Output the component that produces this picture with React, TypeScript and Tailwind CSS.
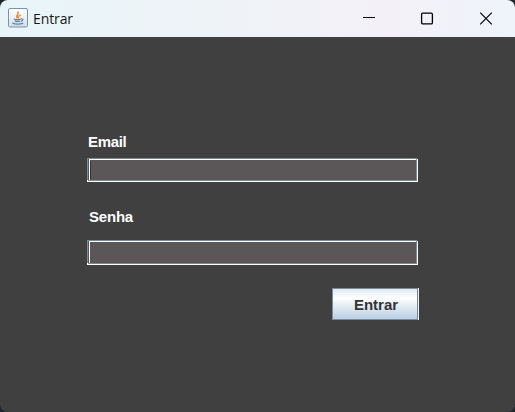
import React from "react";

function JavaIcon() {
  return (
    <svg width="20" height="20" viewBox="0 0 20 20" fill="none">
      <defs>
        <linearGradient id="tile" x1="0" y1="0" x2="0" y2="1">
          <stop offset="0" stopColor="#ffffff" />
          <stop offset="0.5" stopColor="#edf1f4" />
          <stop offset="1" stopColor="#cfdbe4" />
        </linearGradient>
      </defs>
      <rect x="0.5" y="0.5" width="19" height="18.5" rx="1.5" fill="url(#tile)" stroke="#7894aa" />
      <path d="M9.3 10.3C6.8 7.7 12 6.5 9.7 3.5M10.8 10.5C9.2 8.8 10.4 7.8 12.6 6.9" stroke="#ee9045" strokeWidth="1.6" />
      <path d="M5.8 11.2c2 .7 5 .6 7 0M6.8 13.2c1.8.5 3.8.5 5.4 0M13.2 11c2.3-.6 2.2 1.7-.3 2.3M4.4 15.2c2.8 1.4 8 1.3 10.8 0" stroke="#6687a3" strokeWidth="1.3" />
    </svg>
  );
}

function TitleBar() {
  return (
    <header className="flex h-[37px] items-center rounded-t-lg bg-linear-to-r from-[#e8f5f8] via-[#f3f1f7] via-75% to-[#eff3fa] pl-2">
      <div className="-mt-[2px]"><JavaIcon /></div>
      <h1 className="ml-[5px] font-['Open_Sans','Noto_Sans',sans-serif] text-[14px] leading-5 tracking-[-0.1px] text-[#161819]">Entrar</h1>
      <div className="ml-auto flex items-center pr-[22px] text-black">
        <button aria-label="Minimizar" className="mr-[44px]">
          <svg className="block" width="14" height="14" viewBox="0 0 14 14"><path d="M1 5.5h12" stroke="currentColor" /></svg>
        </button>
        <button aria-label="Maximizar" className="mr-[45px]">
          <svg className="block" width="14" height="14" viewBox="0 0 14 14" fill="none"><rect x="1.6" y="1.1" width="10.8" height="10.8" rx="1.2" stroke="currentColor" strokeWidth="1.3" /></svg>
        </button>
        <button aria-label="Fechar">
          <svg className="block" width="14" height="14" viewBox="0 0 14 14"><path d="M1.2 .7l11.6 11.6M12.8 .7L1.2 12.3" stroke="currentColor" strokeWidth="1.2" /></svg>
        </button>
      </div>
    </header>
  );
}

function Field({ label, type, height, caret = false }: { label: string; type: string; height: number; caret?: boolean }) {
  return (
    <div
      className="relative ml-[87px] w-[331px] bg-[#5b5758]"
      style={{ height }}
    >
      <input aria-label={label} type={type} className="block h-full w-full bg-transparent outline-none" />
      <span className="pointer-events-none absolute top-px right-0 bottom-0 left-[2px] border border-white" />
      <span className="pointer-events-none absolute top-0 right-px bottom-px left-0 border border-[#7a8a99]" />
      <span className="pointer-events-none absolute top-px bottom-[2px] left-[2px] w-px bg-white" />
      <span className="pointer-events-none absolute bottom-0 left-0 h-px w-[2px] bg-white" />
      <span className="pointer-events-none absolute bottom-px left-0 h-px w-px bg-white" />
      {caret && <span className="absolute top-[3px] bottom-[3px] left-[3px] w-px bg-[#333]" />}
    </div>
  );
}

export default function App() {
  return (
    <div className="h-[412px] w-[515px] overflow-hidden bg-[#20262b] font-['Liberation_Sans',Arial,sans-serif]">
      <div className="h-full rounded-lg bg-[#404040]">
        <TitleBar />
        <main className="flex flex-col pt-[95px] text-[15px] leading-5 font-bold text-white">
          <label className="ml-[88px] tracking-[-0.35px]">Email</label>
          <div className="h-[6px]" />
          <Field label="Email" type="text" height={24} caret />
          <div className="h-[25px]" />
          <label className="ml-[89px] tracking-[-0.2px]">Senha</label>
          <div className="h-[13px]" />
          <Field label="Senha" type="password" height={25} />
          <button className="mt-[23px] ml-[332px] h-[32px] w-[87px] border-r border-[#e8eff5] text-[#333]">
            <span className="flex h-full items-center justify-center border border-[#7a8a99] bg-linear-to-b from-[#dfe9f2] via-white via-30% to-[#b8cfe5] pt-px pl-[2px]">Entrar</span>
          </button>
        </main>
      </div>
    </div>
  );
}
